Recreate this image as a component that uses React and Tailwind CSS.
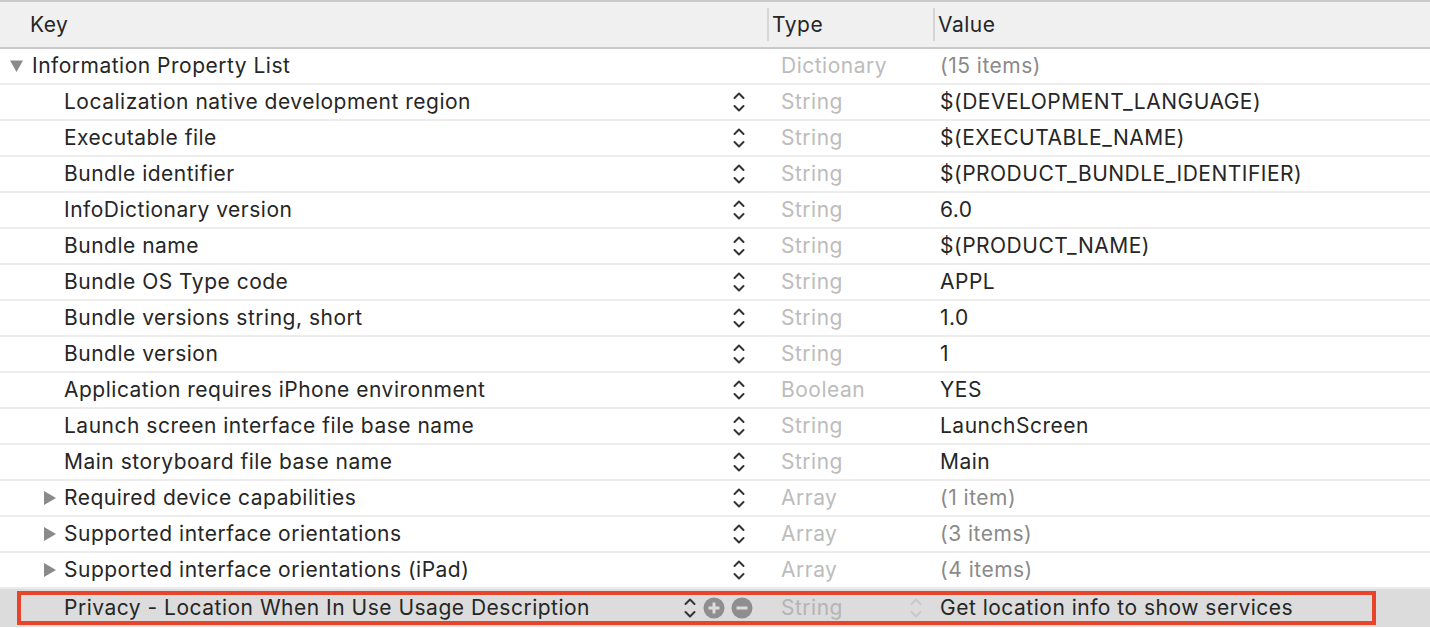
import React from 'react';

const rows = [
    { key: 'Localization native development region', type: 'String', value: '$(DEVELOPMENT_LANGUAGE)' },
    { key: 'Executable file', type: 'String', value: '$(EXECUTABLE_NAME)' },
    { key: 'Bundle identifier', type: 'String', value: '$(PRODUCT_BUNDLE_IDENTIFIER)' },
    { key: 'InfoDictionary version', type: 'String', value: '6.0' },
    { key: 'Bundle name', type: 'String', value: '$(PRODUCT_NAME)' },
    { key: 'Bundle OS Type code', type: 'String', value: 'APPL' },
    { key: 'Bundle versions string, short', type: 'String', value: '1.0' },
    { key: 'Bundle version', type: 'String', value: '1' },
    { key: 'Application requires iPhone environment', type: 'Boolean', value: 'YES' },
    { key: 'Launch screen interface file base name', type: 'String', value: 'LaunchScreen' },
    { key: 'Main storyboard file base name', type: 'String', value: 'Main' },
    { key: 'Required device capabilities', type: 'Array', value: '(1 item)', folded: true },
    { key: 'Supported interface orientations', type: 'Array', value: '(3 items)', folded: true },
    { key: 'Supported interface orientations (iPad)', type: 'Array', value: '(4 items)', folded: true },
];

// up/down chevrons used by the key and type popups
function Stepper({ light }) {
    return (
        <svg width="14" height="24" viewBox="0 0 14 24" fill="none" stroke={light ? '#c8c8c8' : '#333333'} strokeWidth="2" strokeLinecap="round" strokeLinejoin="round">
            <path d="M2.5 8 L7 3.5 L11.5 8" />
            <path d="M2.5 16 L7 20.5 L11.5 16" />
        </svg>
    );
}

function RoundButton({ minus }) {
    return (
        <svg width="22" height="22" viewBox="0 0 22 22">
            <circle cx="11" cy="11" r="10.5" fill="#8e8e8e" />
            <path d="M5.5 11 H16.5" stroke="#dcdcdc" strokeWidth="3" />
            {!minus && <path d="M11 5.5 V16.5" stroke="#dcdcdc" strokeWidth="3" />}
        </svg>
    );
}

function Triangle({ open }) {
    return (
        <svg width="14" height="14" viewBox="0 0 14 14">
            {open ? <path d="M0 1.5 H13 L6.5 13 Z" fill="#8a8a8a" /> : <path d="M1 0 L13 7 L1 14 Z" fill="#8a8a8a" />}
        </svg>
    );
}

export default function App() {
    return (
        <div className="w-[1430px] h-[628px] overflow-hidden bg-white text-[21px] tracking-[0.5px] text-[#262626]" style={{ fontFamily: 'Inter, "Liberation Sans", sans-serif' }}>
            {/* header */}
            <div className="grid grid-cols-[767px_166px_1fr] h-[49px] bg-[#f0f0f0] border-t-2 border-b-2 border-[#c9c9c9]">
                <div className="flex items-center pl-[30px]">Key</div>
                <div className="flex items-center pl-[5px] relative">
                    <span className="absolute left-0 top-[6px] bottom-[6px] w-[2px] bg-[#d6d6d6]" />
                    Type
                </div>
                <div className="flex items-center pl-[5px] relative">
                    <span className="absolute left-0 top-[6px] bottom-[6px] w-[2px] bg-[#d6d6d6]" />
                    Value
                </div>
            </div>

            {/* root */}
            <div className="grid grid-cols-[767px_166px_1fr] h-[36px] border-b-2 border-[#ececec]">
                <div className="flex items-center pl-[10px] gap-[8px]">
                    <Triangle open />
                    <span>Information Property List</span>
                </div>
                <div className="flex items-center pl-[14px] text-[#bcbcbc]">Dictionary</div>
                <div className="flex items-center pl-[7px] text-[#8a8a8a]">(15 items)</div>
            </div>

            {rows.map((r) => (
                <div key={r.key} className="grid grid-cols-[767px_166px_1fr] h-[36px] border-b-2 border-[#ececec]">
                    <div className="flex items-center pl-[43px]">
                        <span className="w-[21px]">{r.folded && <Triangle />}</span>
                        <span className="flex-1">{r.key}</span>
                        <span className="mr-[21px] flex items-center"><Stepper /></span>
                    </div>
                    <div className="flex items-center pl-[14px] text-[#bcbcbc]">{r.type}</div>
                    <div className={`flex items-center pl-[7px] ${r.folded ? 'text-[#8a8a8a]' : ''}`}>{r.value}</div>
                </div>
            ))}

            {/* selected row */}
            <div className="relative grid grid-cols-[767px_166px_1fr] h-[38px] bg-[#dcdcdc]">
                <div className="flex items-center pl-[64px]">
                    <span className="flex-1">Privacy - Location When In Use Usage Description</span>
                    <span className="flex items-center gap-[6px] mr-[14px]">
                        <Stepper />
                        <RoundButton />
                        <RoundButton minus />
                    </span>
                </div>
                <div className="flex items-center pl-[14px] text-[#b4b4b4]">
                    <span className="flex-1">String</span>
                    <span className="mr-[10px] flex items-center"><Stepper light /></span>
                </div>
                <div className="flex items-center pl-[7px]">Get location info to show services</div>
                <div className="absolute left-[17px] top-[2px] w-[1359px] h-[34px] border-4 border-[#e8442b]" />
            </div>
        </div>
    );
}
